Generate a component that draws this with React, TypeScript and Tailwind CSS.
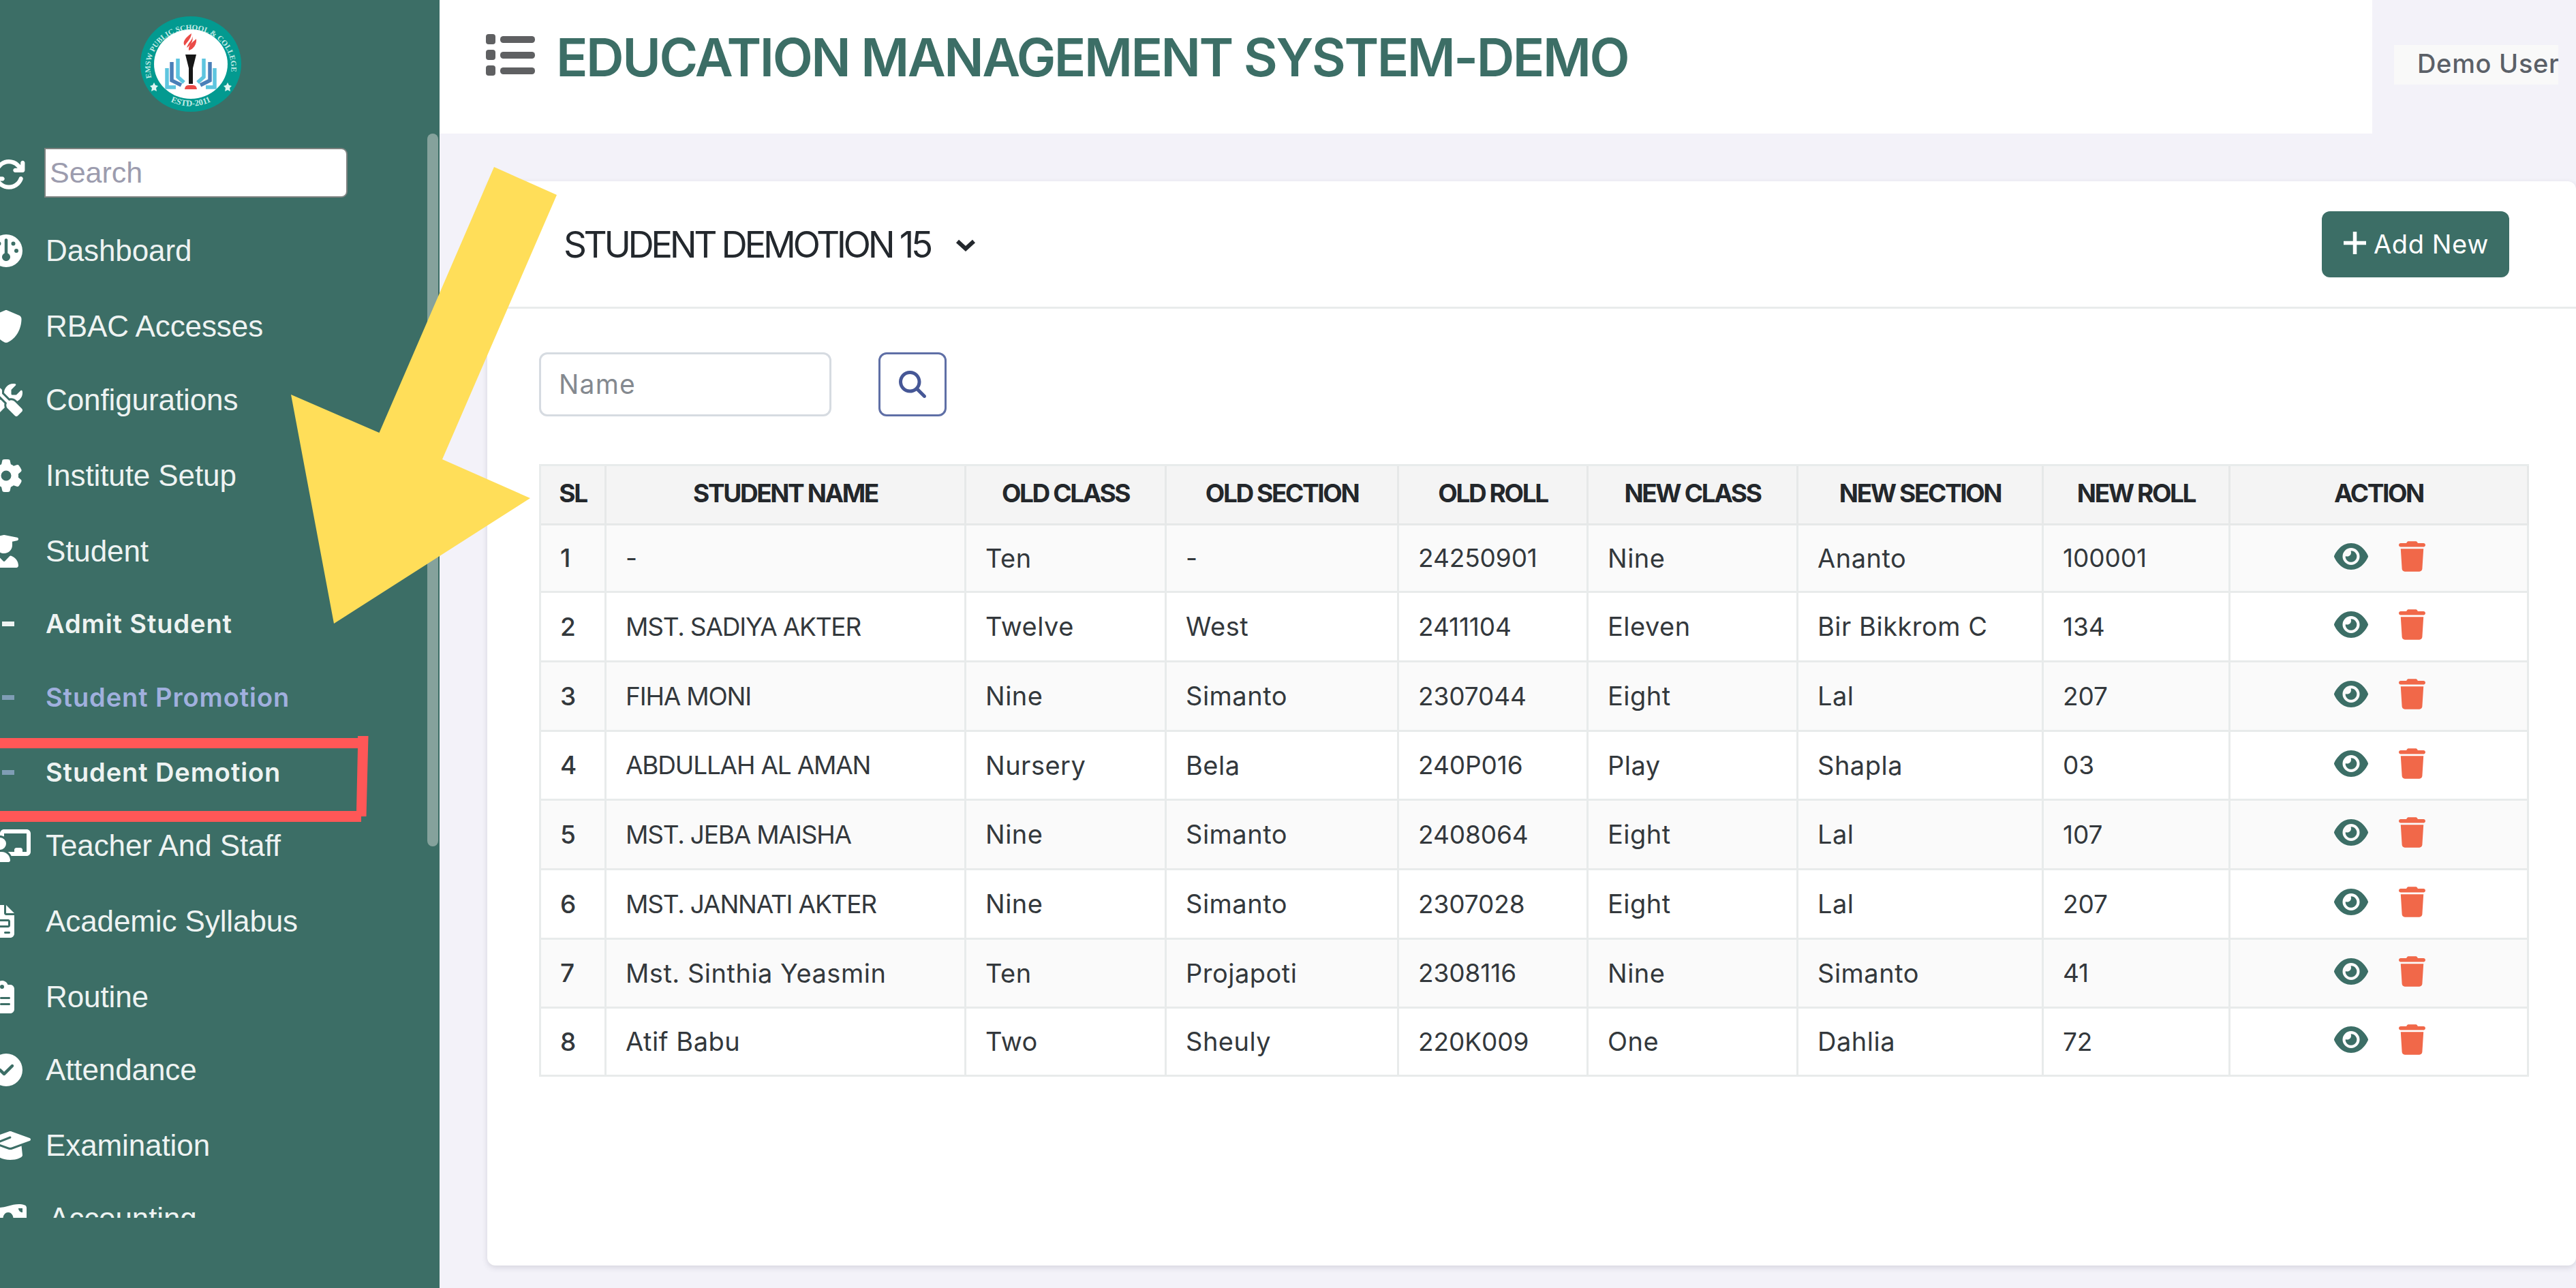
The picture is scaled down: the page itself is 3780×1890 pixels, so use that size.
import type { ComponentType } from "react";
import {
  FaArrowsRotate,
  FaChalkboardUser,
  FaCircleCheck,
  FaClipboardList,
  FaEye,
  FaFileInvoice,
  FaGauge,
  FaGear,
  FaGraduationCap,
  FaMagnifyingGlass,
  FaMoneyBillWave,
  FaScrewdriverWrench,
  FaShield,
  FaTrash,
  FaUserGraduate,
} from "react-icons/fa6";

type Icon = ComponentType<{ className?: string }>;

type NavItem = { label: string; icon?: Icon; iconWidth?: string; height: string; tone?: string; dash?: string };

const navItems: NavItem[] = [
  { label: "Dashboard", icon: FaGauge, iconWidth: "w-[48px]", height: "h-[111px]" },
  { label: "RBAC Accesses", icon: FaShield, iconWidth: "w-[48px]", height: "h-[108px]" },
  { label: "Configurations", icon: FaScrewdriverWrench, iconWidth: "w-[48px]", height: "h-[111px]" },
  { label: "Institute Setup", icon: FaGear, iconWidth: "w-[48px]", height: "h-[111px]" },
  { label: "Student", icon: FaUserGraduate, iconWidth: "w-[42px]", height: "h-[106px]" },
  { label: "Admit Student", height: "h-[108px]", tone: "text-[#eef3f2]", dash: "bg-[#eef3f2]" },
  { label: "Student Promotion", height: "h-[110px]", tone: "text-[#a0b0de]", dash: "bg-[#7f9db5]" },
  { label: "Student Demotion", height: "h-[108px]", tone: "text-[#eef3f2]", dash: "bg-[#7f9db5]" },
  { label: "Teacher And Staff", icon: FaChalkboardUser, iconWidth: "w-[60px]", height: "h-[111px]" },
  { label: "Academic Syllabus", icon: FaFileInvoice, iconWidth: "w-[36px]", height: "h-[111px]" },
  { label: "Routine", icon: FaClipboardList, iconWidth: "w-[36px]", height: "h-[107px]" },
  { label: "Attendance", icon: FaCircleCheck, iconWidth: "w-[48px]", height: "h-[111px]" },
  { label: "Examination", icon: FaGraduationCap, iconWidth: "w-[60px]", height: "h-[107px]" },
  { label: "Accounting", icon: FaMoneyBillWave, iconWidth: "w-[54px]", height: "h-[110px]", tone: "pl-[5px]" },
];

const headers = ["SL", "STUDENT NAME", "OLD CLASS", "OLD SECTION", "OLD ROLL", "NEW CLASS", "NEW SECTION", "NEW ROLL", "ACTION"];

const rows: { height: string; cells: string[] }[] = [
  { height: "h-[99px]", cells: ["1", "-", "Ten", "-", "24250901", "Nine", "Ananto", "100001"] },
  { height: "h-[102px]", cells: ["2", "MST. SADIYA AKTER", "Twelve", "West", "2411104", "Eleven", "Bir Bikkrom C", "134"] },
  { height: "h-[102px]", cells: ["3", "FIHA MONI", "Nine", "Simanto", "2307044", "Eight", "Lal", "207"] },
  { height: "h-[101px]", cells: ["4", "ABDULLAH AL AMAN", "Nursery", "Bela", "240P016", "Play", "Shapla", "03"] },
  { height: "h-[102px]", cells: ["5", "MST. JEBA MAISHA", "Nine", "Simanto", "2408064", "Eight", "Lal", "107"] },
  { height: "h-[102px]", cells: ["6", "MST. JANNATI AKTER", "Nine", "Simanto", "2307028", "Eight", "Lal", "207"] },
  { height: "h-[101px]", cells: ["7", "Mst. Sinthia Yeasmin", "Ten", "Projapoti", "2308116", "Nine", "Simanto", "41"] },
  { height: "h-[100px]", cells: ["8", "Atif Babu", "Two", "Sheuly", "220K009", "One", "Dahlia", "72"] },
];

const columns = "grid grid-cols-[96px_528px_294px_341px_278px_308px_360px_274px_438px]";

/* Capitals and figures are set tighter than mixed-case words. */
function cellText(value: string) {
  if (/[a-z]/.test(value)) return "text-[38px] tracking-[0.5px]";
  if (/^[A-Z]/.test(value)) return "tracking-[-1.2px]";
  return "tracking-[-0.1px]";
}

function SchoolLogo() {
  return (
    <svg className="h-[140px] w-[148px]" viewBox="0 0 148 140">
      <defs>
        <path id="logo-top" d="M 17 92 A 59.5 56 0 1 1 131 92" />
        <path id="logo-bottom" d="M 28 114 A 66 63 0 0 0 120 114" />
      </defs>
      <ellipse cx="74" cy="70" rx="74" ry="70" fill="#039a90" />
      <ellipse cx="74" cy="70" rx="54" ry="51" fill="#ffffff" />
      <text fontFamily="Liberation Serif" fontWeight="700" fontSize="11.200" fill="#c5ebe6">
        <textPath href="#logo-top" startOffset="2">EMSW PUBLIC SCHOOL &amp; COLLEGE</textPath>
      </text>
      <text fontFamily="Liberation Serif" fontWeight="700" fontSize="12.500" fill="#c5ebe6">
        <textPath href="#logo-bottom" startOffset="50%" textAnchor="middle">ESTD-2011</textPath>
      </text>
      <path d="M20 97l2 4 4 1-3 3 1 5-4-2-4 2 1-5-3-3 4-1zM128 97l2 4 4 1-3 3 1 5-4-2-4 2 1-5-3-3 4-1z" fill="#e0f5f2" />
      <path d="M75 25C66 31 61 38 65 43C68 38 74 34 75 25ZM82 33C83 41 78 48 71 50C70 43 75 39 82 33ZM76 28C78 34 70 38 68 46C72 44 79 37 76 28Z" fill="#ea4b47" />
      <path d="M66 56H82L77 76V99H71V76Z" fill="#171717" />
      <path d="M65 107C66 100 70 101 74 101C78 101 82 100 83 107Z" fill="#ea4b47" />
      <g fill="none" strokeWidth="5.5">
        <path d="M39 76V104H52M109 76V104H96" stroke="#5ec5df" />
        <path d="M46 67V94L60 101M102 67V94L88 101" stroke="#4a7fb8" />
        <path d="M55 62V89L64 97M93 62V89L84 97" stroke="#5ec5df" />
      </g>
    </svg>
  );
}

function Sidebar() {
  return (
    <aside className="relative flex h-full w-[645px] shrink-0 flex-col bg-[#3c6e66] font-['Liberation_Sans',Arial,sans-serif]">
      <div className="flex h-[196px] shrink-0 items-start pt-6 pl-[206px]">
        <SchoolLogo />
      </div>
      <div className="flex h-[1591px] flex-col overflow-hidden">
        <div className="mt-[21px] flex h-[73px] shrink-0 items-center">
          <FaArrowsRotate className="mt-1 -ml-3 h-[50px] w-[50px] shrink-0 text-white" />
          <div className="ml-[27px] flex h-[73px] w-[445px] items-center rounded-r-[9px] border-2 border-[#7d8280] bg-white pl-1.5 text-[43px] text-[#9c9cae]">
            Search
          </div>
        </div>
        <nav className="mt-12 flex flex-col">
          {navItems.map(({ label, icon: ItemIcon, iconWidth, height, tone = "", dash }) => (
            <div key={label} className={`flex shrink-0 items-start ${height}`}>
              <div className="flex h-[60px] w-[67px] shrink-0 items-center">
                {ItemIcon ? (
                  <ItemIcon className={`-ml-[15px] h-12 shrink-0 text-white ${iconWidth}`} />
                ) : (
                  <div className={`ml-[3px] h-[7px] w-[18px] ${dash}`} />
                )}
              </div>
              {ItemIcon ? (
                <span className={`text-[44px] leading-[60px] tracking-[-0.1px] whitespace-nowrap text-[#eef3f2] ${tone}`}>{label}</span>
              ) : (
                <span className={`font-['Inter',sans-serif] text-[38px] leading-[61px] font-semibold tracking-[0.9px] whitespace-nowrap ${tone}`}>
                  {label}
                </span>
              )}
            </div>
          ))}
        </nav>
      </div>
      <div className="absolute top-[196px] left-[627px] h-[1046px] w-4 rounded-full bg-[#85a29c]" />
    </aside>
  );
}

function Header() {
  return (
    <header className="flex h-[196px] shrink-0">
      <div className="flex w-[2836px] items-start bg-white pl-[68px]">
        <svg className="mt-[50px] h-[62px] w-[73px]" viewBox="0 0 73 62" fill="#5f6062">
          {[0, 23, 46].map((y) => (
            <g key={y}>
              <rect x="0" y={y} width="14" height="15" rx="4" />
              <rect x="21" y={y + 3} width="51" height="10" rx="4.5" />
            </g>
          ))}
        </svg>
        <h1 className="mt-[34px] ml-[30px] text-[77px] leading-[100px] font-semibold tracking-[-2.5px] whitespace-nowrap text-[#3c6e66]">
          EDUCATION MANAGEMENT SYSTEM-DEMO
        </h1>
      </div>
      <div className="mt-[66px] ml-8 flex h-[58px] w-[241px] items-center bg-[#f9f9f9] pb-1 pl-[34px] text-[38px] font-medium tracking-[0.7px] whitespace-nowrap text-[#5b6068]">
        Demo User
      </div>
    </header>
  );
}

function Toolbar() {
  return (
    <div className="flex h-[187px] shrink-0 items-center border-b-3 border-[#e9ecec] pr-[98px] pl-[112px]">
      <h2 className="pt-1 text-[53px] tracking-[-4.4px] whitespace-nowrap text-[#23282d]">STUDENT DEMOTION 15</h2>
      <svg className="mt-1 ml-[37px] h-5 w-[30px]" viewBox="0 0 30 20" fill="none" stroke="#23282d" strokeWidth="6">
        <path d="M3 4L15 15L27 4" />
      </svg>
      <button className="ml-auto flex h-[97px] w-[275px] items-center rounded-xl bg-[#3c6e66] pl-[32px] text-[38px] tracking-[0.6px] whitespace-nowrap text-white">
        <svg className="mr-[11px] mb-1 size-[33px]" viewBox="0 0 33 33" stroke="white" strokeWidth="5.5">
          <path d="M16.500 0V33M0 16.500H33" />
        </svg>
        Add New
      </button>
    </div>
  );
}

function DemotionTable() {
  return (
    <div className="mt-[70px] ml-[76px] w-[2920px] border-t-3 border-l-3 border-[#e8ebeb] text-[37px] text-[#33383c]">
      <div className={`${columns} h-[87px] bg-[#f4f4f4] font-bold text-[#23272b]`}>
        {headers.map((title) => (
          <div key={title} className="flex items-center justify-center border-r-3 border-b-3 border-[#e6e8e8] pb-1 tracking-[-2.4px] whitespace-nowrap">
            {title}
          </div>
        ))}
      </div>
      {rows.map(({ height, cells }) => (
        <div key={cells[0]} className={`${columns} ${height} odd:bg-white even:bg-[#fafafa]`}>
          {cells.map((value, i) => (
            <div
              key={i}
              className={`flex items-center border-r-3 border-b-3 border-[#e8ebeb] pl-[28px] whitespace-nowrap ${i === 0 ? "font-medium" : cellText(value)}`}
            >
              {value}
            </div>
          ))}
          <div className="flex items-center gap-[45px] border-r-3 border-b-3 border-[#e8ebeb] pb-[6px] pl-[152px]">
            <FaEye className="h-[45px] w-[50px] text-[#3c6e66]" />
            <FaTrash className="h-[45px] w-[39px] text-[#f16849]" />
          </div>
        </div>
      ))}
    </div>
  );
}

export default function App() {
  return (
    <div className="relative flex h-[1890px] w-[3780px] overflow-hidden bg-[#f3f2f9] font-['Inter',sans-serif]">
      <Sidebar />
      <div className="flex min-w-0 flex-1 flex-col">
        <Header />
        <section className="mt-[70px] ml-[70px] flex h-[1591px] flex-col rounded-xl bg-white shadow-[0_3px_9px_rgba(60,60,90,0.16)]">
          <Toolbar />
          <div className="mt-[64px] ml-[76px] flex shrink-0">
            <div className="flex h-[94px] w-[429px] items-center rounded-xl border-3 border-[#d6dbe1] pl-[26px] text-[39px] tracking-[1.2px] text-[#84898f]">
              Name
            </div>
            <button className="ml-[69px] flex h-[94px] w-[100px] items-center justify-center rounded-xl border-3 border-[#5f6fa6] text-[#465796]">
              <FaMagnifyingGlass className="size-10" />
            </button>
          </div>
          <DemotionTable />
        </section>
      </div>
      <svg className="absolute top-0 left-0 h-[1220px] w-[820px]" viewBox="0 0 820 1220">
        <path d="M725 245L817 286L649 674L778 731L490 915L427 579L556.500 635Z" fill="#ffde59" />
        <path d="M0 1083H525V1080H540.500L537.500 1198H530V1206H0V1190H523L525 1098H0Z" fill="#ff5757" />
      </svg>
    </div>
  );
}
